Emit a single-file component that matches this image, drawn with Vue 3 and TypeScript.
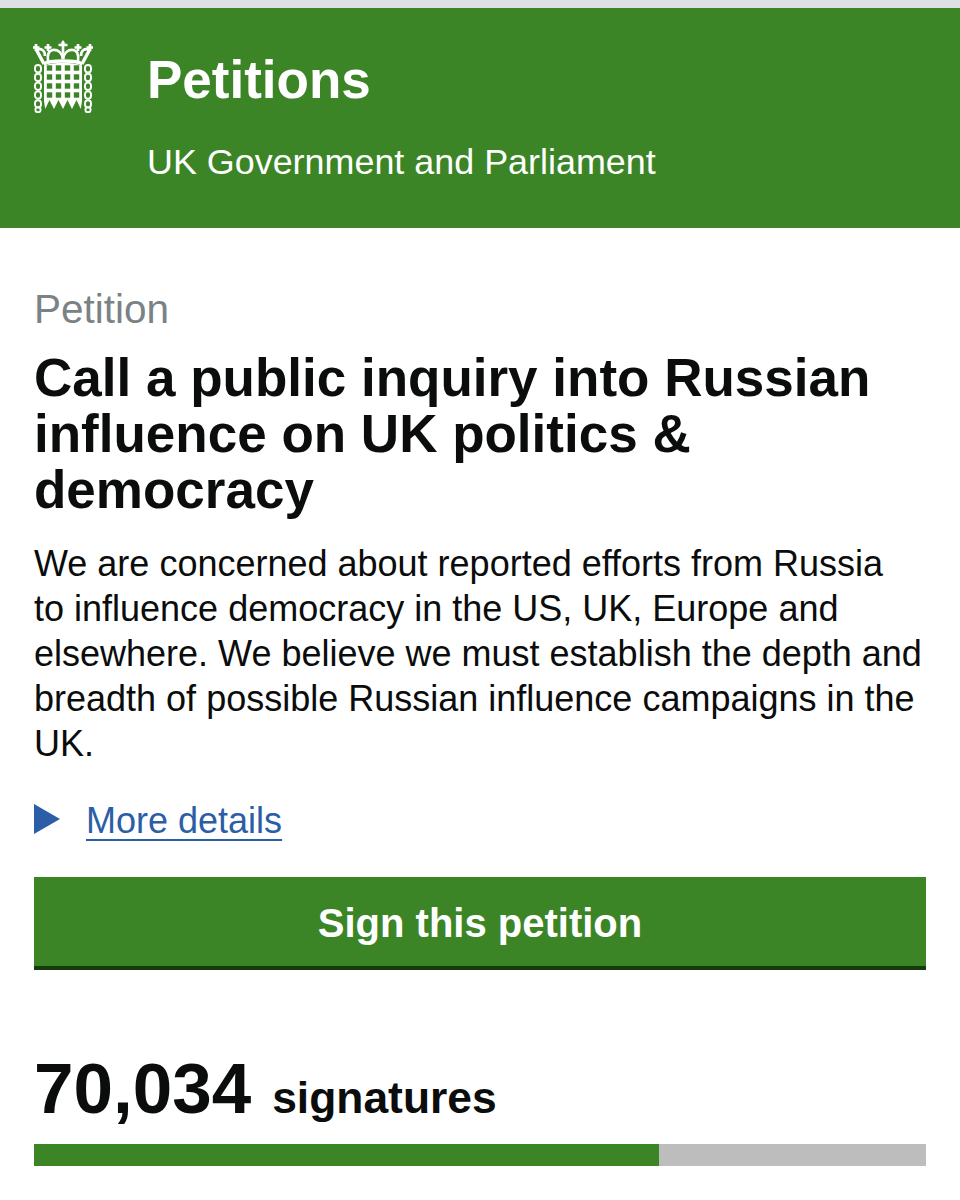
<script setup lang="ts">
const cols = [16.5, 25.5, 34.5, 43.5];
const rows = [28, 37, 46, 55];
const links = [0, 1, 2, 3, 4];
const chains = [5, 55];
const sideTips = [3, 15, 45, 57];
const pct = 70.1;
</script>

<template>
  <div class="page">
    <header class="masthead">
      <svg class="logo" width="60" height="73" viewBox="0 0 60 73" aria-hidden="true">
        <g fill="none" stroke="#fff" stroke-width="2.700">
          <path d="M10.500 24C16 20 44 20 49.500 24" stroke-width="3.600" />
          <path d="M30 3V19M25.500 5H34.500" />
          <path d="M30 19C29 13 25 9.500 20 10C16 10.500 14 14 15 21" />
          <path d="M30 19C31 13 35 9.500 40 10C44 10.500 46 14 45 21" />
          <path d="M11 24L3 9M49 24L57 9" stroke-width="3.400" />
          <path d="M4 10C8 8 12 10 12 16M56 10C52 8 48 10 48 16" />
          <path v-for="t in sideTips" :key="t" :d="`M${t - 3.500} 7.500H${t + 3.500}M${t} 4V11`" />
        </g>
        <path d="M30 0l2.500 3.500h-5z" fill="#fff" />
        <g fill="none" stroke="#fff" stroke-width="1.900">
          <template v-for="x in chains" :key="x">
            <rect v-for="l in links" :key="l" :x="x - 3" :y="25 + l * 8.800" width="6" height="7.400" rx="3" />
            <circle :cx="x" cy="69.700" r="2.600" />
          </template>
        </g>
        <path d="M11 25.500C17 23.500 23 23 30 23s13 .5 19 2.500V61L47.800 69 43.500 60 39 69 34.500 60 30 69 25.500 60 21 69 16.500 60 12.200 69 11 61z" fill="#fff" />
        <g fill="#3c8527">
          <template v-for="y in rows" :key="y">
            <rect v-for="x in cols" :key="x" :x="x - 2.700" :y="y - 2.700" width="5.400" height="5.400" />
          </template>
        </g>
      </svg>
      <div class="brand">
        <div class="brand-title">Petitions</div>
        <div class="brand-sub">UK Government and Parliament</div>
      </div>
    </header>

    <main class="content">
      <div class="eyebrow">Petition</div>
      <h1 class="title">Call a public inquiry into Russian influence on UK politics &amp; democracy</h1>
      <p class="summary">We are concerned about reported efforts from Russia<br />to influence democracy in the US, UK, Europe and elsewhere. We believe we must establish the depth and breadth of possible Russian influence campaigns in the UK.</p>
      <div class="details">
        <span class="arrow"></span>
        <a class="details-link" href="#">More details</a>
      </div>
      <button class="sign" type="button">Sign this petition</button>
      <div class="count">
        <span class="count-num">70,034</span>
        <span class="count-label">signatures</span>
      </div>
      <div class="bar">
        <div class="bar-fill" :style="{ width: pct + '%' }"></div>
      </div>
    </main>
  </div>
</template>

<style>
html, body { margin: 0; background: #fff; }
</style>

<style scoped>
.page {
  width: 960px;
  height: 1200px;
  overflow: hidden;
  background: #fff;
  font-family: "Liberation Sans", Arial, sans-serif;
  color: #0b0c0c;
}
.masthead {
  box-sizing: border-box;
  height: 228px;
  border-top: 8px solid #dee0e2;
  background: #3c8527;
  display: flex;
  align-items: flex-start;
  padding: 32px 0 0 33px;
  color: #fff;
}
.logo { flex: none; }
.brand { margin-left: 54px; margin-top: 10px; }
.brand-title { font-size: 53px; font-weight: 700; line-height: 60px; }
.brand-sub { font-size: 35.900px; line-height: 44px; margin-top: 30px; }
.content { padding: 57px 34px 0; }
.eyebrow { font-size: 40.500px; line-height: 48px; color: #7b8286; }
.title {
  margin: 17px 0 0;
  font-size: 53px;
  line-height: 56px;
  font-weight: 700;
}
.summary { margin: 23px 0 0; font-size: 36px; line-height: 45px; }
.details { display: flex; align-items: center; margin-top: 32px; height: 45px; }
.arrow {
  width: 0;
  height: 0;
  border-left: 26px solid #2b5ea7;
  border-top: 15px solid transparent;
  border-bottom: 15px solid transparent;
  margin-right: 26px;
  margin-top: -4px;
}
.details-link {
  font-size: 36px;
  color: #2b5ea7;
  text-decoration: underline;
  text-decoration-thickness: 2px;
  text-underline-offset: 6px;
}
.sign {
  display: block;
  box-sizing: border-box;
  width: 892px;
  height: 93px;
  margin-top: 34px;
  padding: 4px 0 0;
  border: 0;
  border-bottom: 4px solid #143c0a;
  background: #3c8527;
  color: #fff;
  font-family: inherit;
  font-size: 40px;
  font-weight: 700;
}
.count { display: flex; align-items: baseline; margin-top: 79px; }
.count-num { font-size: 71px; line-height: 80px; font-weight: 700; }
.count-label { font-size: 44.400px; font-weight: 700; margin-left: 21px; }
.bar { margin-top: 15px; height: 22px; background: #bdbdbe; }
.bar-fill { height: 100%; background: #3c8527; }
</style>
